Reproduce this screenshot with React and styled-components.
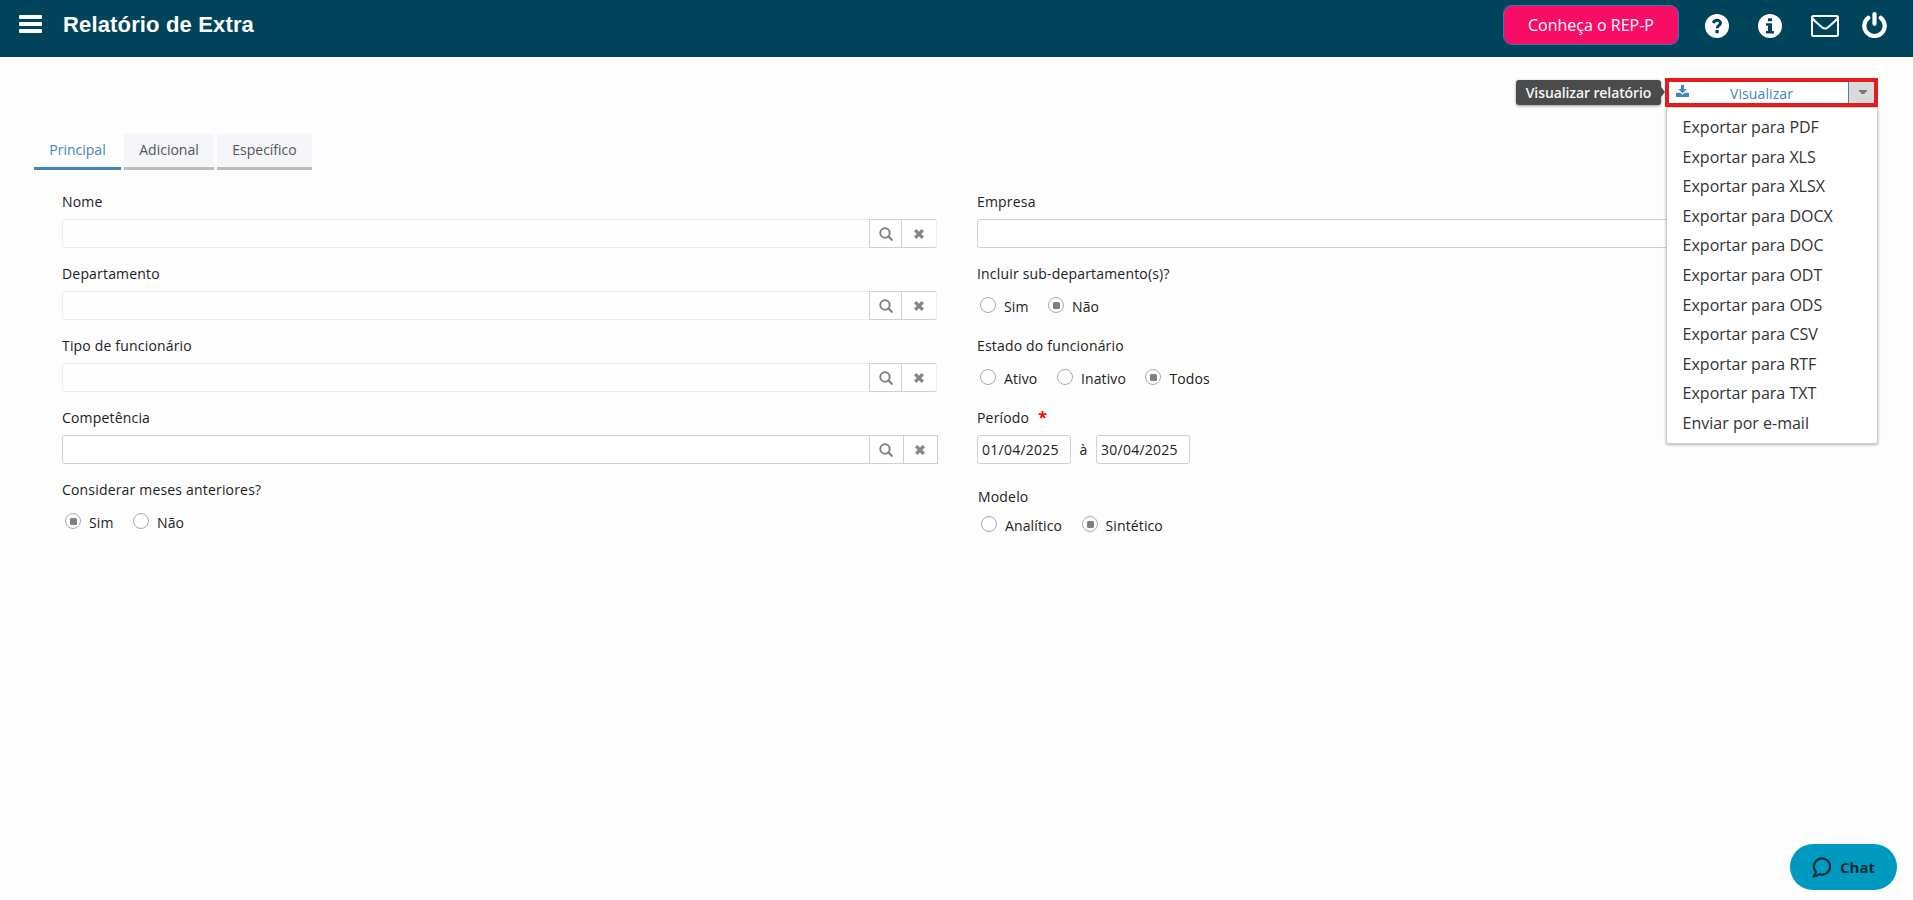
import React from "react";
import styled, { createGlobalStyle } from "styled-components";

const GlobalStyle = createGlobalStyle`
  *, *::before, *::after { box-sizing: border-box; }
  body {
    margin: 0;
    height: 900px;
    overflow: hidden;
    background: #fdfdfd;
    color: #222;
    font-family: "Open Sans", "Noto Sans", sans-serif;
    font-size: 14px;
  }
  button, input { font: inherit; color: inherit; margin: 0; padding: 0; }
`;

const Page = styled.div`
  position: relative;
  height: 900px;
  display: flex;
  flex-direction: column;
`;

const Header = styled.header`
  height: 57px;
  flex: none;
  display: flex;
  align-items: flex-start;
  padding: 0 26px 0 19px;
  background: #00445b;
  color: #fff;
`;

const MenuToggle = styled.button`
  display: flex;
  flex-direction: column;
  gap: 3px;
  width: 23px;
  margin-top: 15px;
  border: 0;
  background: none;
`;

const Bar = styled.span`
  height: 4px;
  border-radius: 1px;
  background: #fff;
`;

const Title = styled.h1`
  flex: 1;
  margin: 0 0 0 21px;
  padding-top: 10px;
  font: bold 22px/30px "Liberation Sans", Arial, sans-serif;
  letter-spacing: 0.15px;
`;

const PromoButton = styled.button`
  width: 176px;
  height: 40px;
  margin: 5px 26px 0 0;
  border: 1px solid #337ab7;
  border-radius: 9px;
  background: #f70d65;
  color: #fff;
  font-size: 16px;
  line-height: 38px;
`;

const HeaderIcon = styled.span`
  display: flex;
  width: ${(p) => p.$width}px;
  margin-top: ${(p) => p.$top}px;
  margin-left: ${(p) => p.$gap || 0}px;
  svg { display: block; width: 100%; height: auto; }
`;

const ActionBar = styled.div`
  display: flex;
  justify-content: flex-end;
  height: 49px;
  flex: none;
  padding: 21px 35px 0 0;
`;

const Tooltip = styled.div`
  display: flex;
  align-items: center;
  justify-content: center;
  width: 145px;
  height: 25px;
  margin: 2px 0 0;
  border-radius: 3px;
  background: #4b4b4b;
  color: #f5f5f5;
  font-weight: 600;
  letter-spacing: -0.1px;
  white-space: nowrap;
  box-shadow: 0 1px 3px rgba(0, 0, 0, 0.4);
`;

const TooltipArrow = styled.span`
  width: 4px;
  height: 10px;
  margin-top: 9px;
  background: #4b4b4b;
  clip-path: polygon(0 0, 100% 50%, 0 100%);
`;

const SplitButton = styled.div`
  position: relative;
  display: flex;
  width: 213px;
  height: 29px;
  border: 4px solid #e61c1c;
  background: #fff;
`;

const ViewButton = styled.button`
  display: flex;
  align-items: center;
  width: 179px;
  padding-left: 7px;
  border: 0;
  background: #fff;
  color: #4285bd;
  svg { display: block; margin-top: -4px; }
`;

const ViewLabel = styled.span`
  flex: 1;
  padding: 2px 14px 0 0;
  line-height: 18px;
  letter-spacing: 0.1px;
`;

const CaretButton = styled.button`
  display: flex;
  align-items: center;
  justify-content: center;
  flex: 1;
  padding: 0 0 1px 3px;
  border: 0;
  border-left: 1px solid #4285bd;
  background: #dadada;
`;

const ExportMenu = styled.ul`
  position: absolute;
  top: 25px;
  left: -3px;
  width: 212px;
  height: 337px;
  margin: 0;
  padding: 5px 0 0 15.6px;
  border: 1px solid #d0d0d0;
  border-radius: 2px;
  background: #fff;
  box-shadow: 0 1px 3px rgba(0, 0, 0, 0.3);
  list-style: none;
  z-index: 2;
`;

const ExportItem = styled.li`
  height: 29.6px;
  font-size: 16px;
  line-height: 29.6px;
  color: #333;
  white-space: nowrap;
`;

const Tabs = styled.nav`
  display: flex;
  gap: 3px;
  flex: none;
  padding: 28px 0 0 34px;
`;

const Tab = styled.button`
  width: ${(p) => p.$width}px;
  height: 36px;
  padding-bottom: 2px;
  border: 0;
  border-bottom: 3px solid ${(p) => (p.$active ? "#4285bd" : "#bcbcbc")};
  background: ${(p) => (p.$active ? "transparent" : "#f5f6f9")};
  color: ${(p) => (p.$active ? "#4285bd" : "#555")};
  line-height: 30px;
`;

const Form = styled.form`
  display: grid;
  grid-template-columns: 876px 876px;
  column-gap: 39px;
  padding: 22px 0 0 62px;
`;

const Column = styled.div`
  display: flex;
  flex-direction: column;
`;

const Field = styled.div`
  height: ${(p) => p.$height || 72}px;
  padding-left: ${(p) => p.$indent || 0}px;
`;

const Label = styled.div`
  height: ${(p) => p.$height || 27}px;
  line-height: 20px;
  letter-spacing: 0.18px;
`;

const Required = styled.span`
  margin-left: 9px;
  color: #f00;
  font-weight: 700;
  font-size: 16px;
  line-height: 1;
`;

const InputGroup = styled.div`
  display: flex;
`;

const TextInput = styled.input`
  width: ${(p) => p.$width}px;
  height: 29px;
  padding: 0 4px;
  border: 1px solid ${(p) => (p.disabled ? "#ededed" : "#d0d0d0")};
  border-radius: ${(p) => (p.$joined ? "3px 0 0 3px" : "3px")};
  background: ${(p) => (p.disabled ? "#fefefe" : "#fff")};
  color: #222;
  letter-spacing: 0.25px;
  outline: 0;
`;

const AddonButton = styled.button`
  display: flex;
  align-items: center;
  justify-content: center;
  width: ${(p) => p.$width}px;
  height: 29px;
  margin-left: -1px;
  padding: 1px ${(p) => p.$shift || 0}px 0 0;
  border: 1px solid #d0d0d0;
  border-right-color: ${(p) => (p.$faded ? "#ededed" : "#d0d0d0")};
  border-radius: ${(p) => (p.$faded ? "0 3px 3px 0" : "0")};
  background: #fff;
`;

const RadioRow = styled.div`
  display: flex;
  gap: 19.5px;
  padding: 6px 0 0 3px;
`;

const RadioOption = styled.label`
  display: flex;
  gap: 8px;
  height: 20px;
  line-height: 20px;
  letter-spacing: 0.12px;
`;

const RadioMark = styled.span`
  display: flex;
  align-items: center;
  justify-content: center;
  width: 16px;
  height: 16px;
  border: 1px solid #aaa;
  border-radius: 50%;
  background: #fff;
  &::after {
    content: "";
    width: 7px;
    height: 7px;
    margin: 1px 0 0 1px;
    border-radius: 1.5px;
    background: ${(p) => (p.$checked ? "#7f7f7f" : "transparent")};
  }
`;

const RangeSeparator = styled.span`
  width: 25px;
  text-align: center;
  line-height: 29px;
`;

const ChatButton = styled.button`
  position: absolute;
  right: 16px;
  bottom: 10px;
  display: flex;
  align-items: center;
  gap: 8px;
  width: 107px;
  height: 46px;
  padding-left: 22px;
  border: 0;
  border-radius: 23px;
  background: #0099bf;
  color: #0c2b36;
  font-size: 15px;
  font-weight: 700;
`;

const SearchIcon = () => (
  <svg width="14" height="14" viewBox="0 0 14 14" fill="none" stroke="#858585">
    <circle cx="6" cy="6" r="4.7" strokeWidth="2" />
    <path d="M9.4 9.4L12.7 12.7" strokeWidth="2.3" strokeLinecap="round" />
  </svg>
);

const ClearIcon = () => (
  <svg width="10" height="10" viewBox="0 0 10 10" stroke="#858585" strokeWidth="3.3">
    <path d="M1.2 1.2L8.8 8.8M8.8 1.2L1.2 8.8" />
  </svg>
);

const HelpIcon = () => (
  <svg viewBox="0 0 24 24">
    <circle cx="12" cy="12" r="12" fill="#fff" />
    <path d="M8.2 9C9 7.300 10.200 6.300 12 6.300C14 6.300 15.500 7.500 15.500 9.100C15.500 11.500 12.200 11.300 12.200 14.300" fill="none" stroke="#00445b" strokeWidth="3.100" />
    <rect x="10.400" y="16" width="3.400" height="3.300" rx="0.400" fill="#00445b" />
  </svg>
);

const InfoIcon = () => (
  <svg viewBox="0 0 24 24">
    <circle cx="12" cy="12" r="12" fill="#fff" />
    <path d="M10 4.200H14V7.300H10ZM8 9.200H14V17H16V19.600H8V17H10V11.800H8Z" fill="#00445b" />
  </svg>
);

const EnvelopeIcon = () => (
  <svg viewBox="0 0 28 22" fill="none" stroke="#fff" strokeWidth="2">
    <rect x="1" y="1" width="26" height="20" rx="1.5" />
    <path d="M1.3 3.2C4 7 8 9.500 11 12.200C13 13.900 15 13.900 17 12.200C20 9.500 24 7 26.700 3.200" />
  </svg>
);

const PowerIcon = () => (
  <svg viewBox="0 0 25 26" fill="none" stroke="#fff" strokeWidth="4.2" strokeLinecap="round">
    <path d="M12.500 2.200V11.800" />
    <path d="M6.200 5.800A10.200 10.200 0 1 0 18.800 5.800" />
  </svg>
);

const DownloadIcon = () => (
  <svg width="13" height="12" viewBox="0 0 13 12" fill="currentColor">
    <path d="M5 0H8V4H10.700L6.500 8.200L2.300 4H5Z" />
    <path d="M0.600 7.700H4.200L6.500 9.800L8.800 7.700H12.400Q13 7.700 13 8.300V11.400Q13 12 12.400 12H0.600Q0 12 0 11.400V8.300Q0 7.700 0.600 7.700Z" />
  </svg>
);

const CaretIcon = () => (
  <svg width="8" height="4" viewBox="0 0 8 4" fill="#777">
    <path d="M0 0H8V1L5 4H3L0 1Z" />
  </svg>
);

const ChatIcon = () => (
  <svg width="20" height="21" viewBox="0 0 20 21" fill="none" stroke="#0c2b36" strokeWidth="2.200" strokeLinejoin="round">
    <path d="M3.800 14.800A8.100 8.100 0 1 1 7.300 17.200Q5 19.300 1.600 19.300Q3.600 17.500 3.800 14.800Z" />
  </svg>
);

const LookupField = ({ label, enabled }) => (
  <Field>
    <Label>{label}</Label>
    <InputGroup>
      <TextInput $joined $width={808} disabled={!enabled} aria-label={label} />
      <AddonButton type="button" $width={enabled ? 35 : 33} $shift={enabled ? 1 : 0} aria-label="Pesquisar">
        <SearchIcon />
      </AddonButton>
      <AddonButton type="button" $width={enabled ? 35 : 36} $shift={1} $faded={!enabled} aria-label="Limpar">
        <ClearIcon />
      </AddonButton>
    </InputGroup>
  </Field>
);

const RadioField = ({ label, options, selected, indent, labelHeight }) => (
  <Field $indent={indent}>
    <Label $height={labelHeight}>{label}</Label>
    <RadioRow>
      {options.map((option) => (
        <RadioOption key={option}>
          <RadioMark $checked={option === selected} />
          <span>{option}</span>
        </RadioOption>
      ))}
    </RadioRow>
  </Field>
);

const EXPORTS = ["PDF", "XLS", "XLSX", "DOCX", "DOC", "ODT", "ODS", "CSV", "RTF", "TXT"];

export default function App() {
  return (
    <Page>
      <GlobalStyle />
      <Header>
        <MenuToggle aria-label="Menu">
          <Bar />
          <Bar />
          <Bar />
        </MenuToggle>
        <Title>Relatório de Extra</Title>
        <PromoButton>Conheça o REP-P</PromoButton>
        <HeaderIcon $width={24} $top={14}><HelpIcon /></HeaderIcon>
        <HeaderIcon $width={24} $top={14} $gap={29}><InfoIcon /></HeaderIcon>
        <HeaderIcon $width={28} $top={15} $gap={29}><EnvelopeIcon /></HeaderIcon>
        <HeaderIcon $width={25} $top={12} $gap={23}><PowerIcon /></HeaderIcon>
      </Header>
      <ActionBar>
        <Tooltip>Visualizar relatório</Tooltip>
        <TooltipArrow />
        <SplitButton>
          <ViewButton>
            <DownloadIcon />
            <ViewLabel>Visualizar</ViewLabel>
          </ViewButton>
          <CaretButton aria-label="Opções">
            <CaretIcon />
          </CaretButton>
          <ExportMenu>
            {EXPORTS.map((format) => (
              <ExportItem key={format}>Exportar para {format}</ExportItem>
            ))}
            <ExportItem>Enviar por e-mail</ExportItem>
          </ExportMenu>
        </SplitButton>
      </ActionBar>
      <Tabs>
        <Tab $active $width={87}>Principal</Tab>
        <Tab $width={90}>Adicional</Tab>
        <Tab $width={95}>Específico</Tab>
      </Tabs>
      <Form>
        <Column>
          <LookupField label="Nome" />
          <LookupField label="Departamento" />
          <LookupField label="Tipo de funcionário" />
          <LookupField label="Competência" enabled />
          <RadioField label="Considerar meses anteriores?" options={["Sim", "Não"]} selected="Sim" />
        </Column>
        <Column>
          <Field>
            <Label>Empresa</Label>
            <TextInput $width={876} aria-label="Empresa" />
          </Field>
          <RadioField label="Incluir sub-departamento(s)?" options={["Sim", "Não"]} selected="Não" />
          <RadioField label="Estado do funcionário" options={["Ativo", "Inativo", "Todos"]} selected="Todos" />
          <Field $height={79}>
            <Label>Período<Required>*</Required></Label>
            <InputGroup>
              <TextInput $width={94} defaultValue="01/04/2025" aria-label="Data inicial" />
              <RangeSeparator>à</RangeSeparator>
              <TextInput $width={94} defaultValue="30/04/2025" aria-label="Data final" />
            </InputGroup>
          </Field>
          <RadioField label="Modelo" options={["Analítico", "Sintético"]} selected="Sintético" indent={1} labelHeight={23} />
        </Column>
      </Form>
      <ChatButton>
        <ChatIcon />
        Chat
      </ChatButton>
    </Page>
  );
}
